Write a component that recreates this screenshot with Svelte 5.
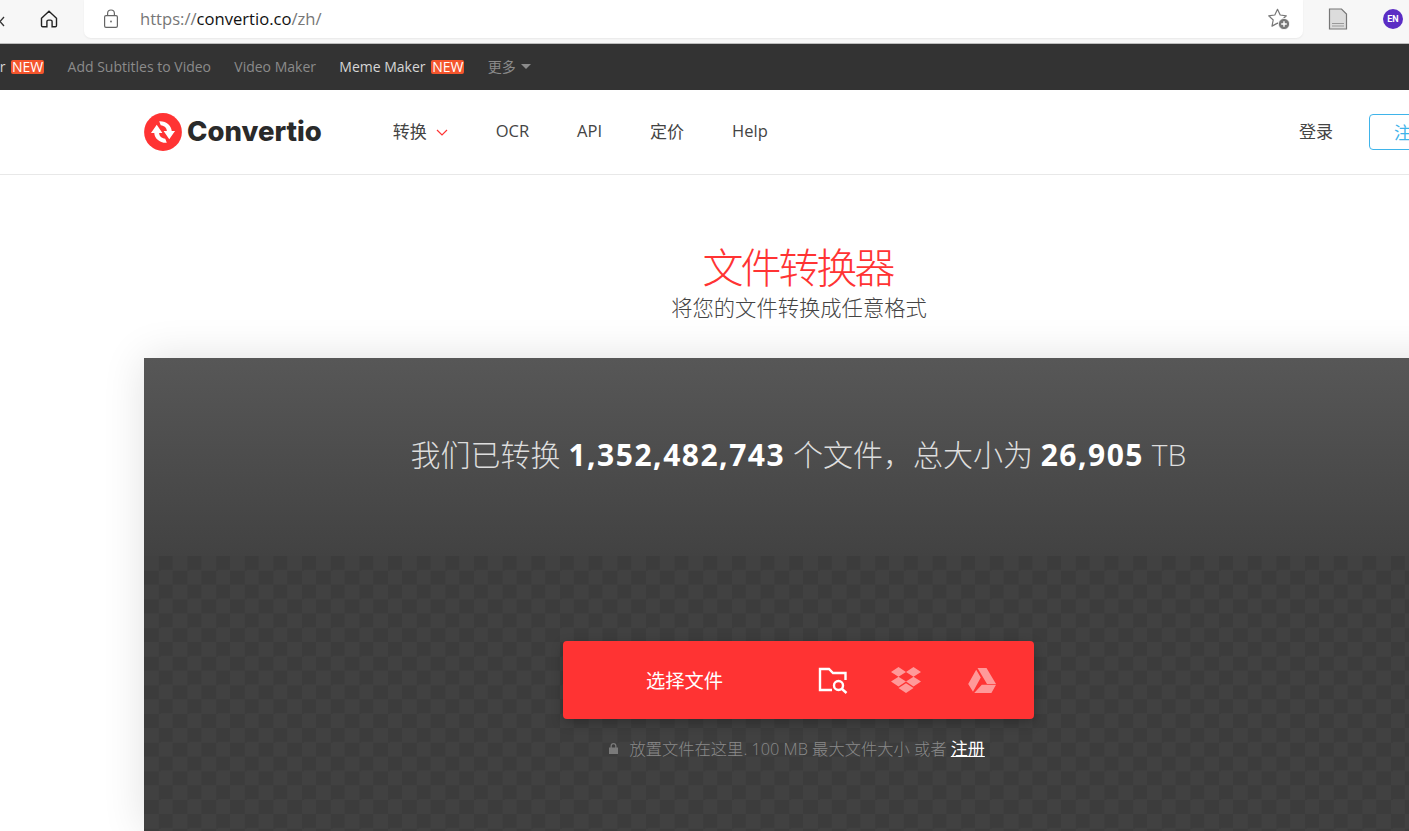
<script>
	const sans = ['Add Subtitles to Video', 'Video Maker'];
</script>

<div class="chrome">
	<svg class="close" width="6" height="12" viewBox="0 0 6 12"><path d="M-4 1l8 9M4 1l-8 9" stroke="#333" stroke-width="1.3" fill="none" /></svg>
	<svg class="home" width="20" height="20" viewBox="0 0 20 20" fill="none" stroke="#222" stroke-width="1.4">
		<path d="M2.5 9.2 10 2.2l7.5 7v7.3a1.2 1.2 0 0 1-1.2 1.2h-3.2v-5a1.6 1.6 0 0 0-1.6-1.6H9.5a1.6 1.6 0 0 0-1.6 1.6v5H3.7a1.2 1.2 0 0 1-1.2-1.2z" />
	</svg>
	<div class="address">
		<svg class="lock" width="16" height="20" viewBox="0 0 16 20" fill="none" stroke="#666" stroke-width="1.2">
			<rect x="1.6" y="6.6" width="12.8" height="11.8" rx="1.4" />
			<path d="M4.6 6.6V4.4a3.4 3.4 0 0 1 6.8 0v2.2" />
			<circle cx="8" cy="12.5" r=".9" fill="#666" stroke="none" />
		</svg>
		<span class="url"><i>https://</i>convertio.co<i>/zh/</i></span>
		<svg class="star" width="24" height="24" viewBox="0 0 24 24" fill="none">
			<path d="M10.5 2.3l2.7 5.7 6.100.8-4.500 4.200 1.200 6.100-5.500-3-5.500 3 1.200-6.100-4.500-4.200 6.100-.8z" stroke="#777" stroke-width="1.2" stroke-linejoin="round" />
			<circle cx="17" cy="17" r="5.6" fill="#777" stroke="#fff" stroke-width=".8" />
			<path d="M17 14.200v5.600M14.200 17h5.600" stroke="#fff" stroke-width="1.4" />
		</svg>
	</div>
	<svg class="doc" width="20" height="22" viewBox="0 0 20 22">
		<path d="M1.500 1h12l5 5v15h-17z" fill="#dcdcdc" stroke="#777" stroke-width="1.200" />
		<path d="M4 15h12v1H4zM4 17.500h12v1H4z" fill="#999" />
	</svg>
	<div class="avatar">EN</div>
</div>

<div class="page">
	<nav class="topnav">
		<div class="topnav__row">
			<span class="topnav__item topnav__item--lit">Video Editor <b>NEW</b></span>
			{#each sans as s}
				<span class="topnav__item">{s}</span>
			{/each}
			<span class="topnav__item topnav__item--lit">Meme Maker <b>NEW</b></span>
			<span class="topnav__item">更多 <em></em></span>
		</div>
	</nav>

	<header class="head">
		<svg class="logo" width="38" height="38" viewBox="0 0 37 37">
			<circle cx="18.500" cy="18.500" r="18.400" fill="#ff3333" />
			<path d="M6.800 19.400 12.400 11.500l5.500 7.900h-3.200c.2 3 2.400 5.200 6 5.600l1.500 4c-7 .4-11.900-4.400-12.200-9.600z" fill="#fff" />
			<path d="M30.200 17.600 24.600 25.500l-5.500-7.900h3.200c-.2-3-2.400-5.200-6-5.600l-1.500-4c7-.4 11.900 4.400 12.200 9.600z" fill="#fff" />
		</svg>
		<span class="brand">Convertio</span>
		<div class="menu">
			<span class="menu__item cjk">转换
				<svg width="12" height="7" viewBox="0 0 12 7" fill="none"><path d="M1 1l5 5 5-5" stroke="#ff3333" stroke-width="1.200" /></svg>
			</span>
			<span class="menu__item">OCR</span>
			<span class="menu__item">API</span>
			<span class="menu__item cjk">定价</span>
			<span class="menu__item">Help</span>
		</div>
		<span class="login cjk">登录</span>
		<span class="signup cjk">注册</span>
	</header>

	<section class="intro">
		<h1>文件转换器</h1>
		<h2>将您的文件转换成任意格式</h2>
	</section>

	<main class="panel">
		<div class="stats">
			我们已转换 <b>1,352,482,743</b> 个文件，总大小为 <b>26,905</b> TB
		</div>
		<div class="drop">
			<div class="pick">
				<span class="pick__label">选择文件</span>
				<svg class="pick__icon" width="30" height="28" viewBox="0 0 30 28" fill="none" stroke="#fff" stroke-width="2.400">
					<path d="M14 24H2V3h9l4 4h12.500v7" />
					<circle cx="20.500" cy="19.500" r="4.500" />
					<path d="M24 23l4.500 4" />
				</svg>
				<svg class="pick__icon pick__icon--dropbox" width="32" height="27" viewBox="0 0 32 27" fill="#fff">
					<path d="M8.500 0 16 5 8.500 9.800 1 5zM23.500 0 31 5l-7.500 4.800L16 5zM1 14.600l7.500-4.800L16 14.600l-7.500 4.800zM23.500 9.800 31 14.600l-7.500 4.800L16 14.600zM8.500 21 16 16.200 23.500 21 16 26z" />
				</svg>
				<svg class="pick__icon pick__icon--drive" width="28" height="25" viewBox="0 0 28 25" fill="#fff">
					<path d="M9.500 0h9L28 16h-9zM8.200 1.800l4.600 7.800L5 23.800.2 16zM13.800 16.800H28L23.400 25H6.200z" />
				</svg>
			</div>
			<p class="hint">
				<svg width="11" height="13" viewBox="0 0 11 13"><path d="M2.500 5.500V4a3 3 0 0 1 6 0v1.500H10V12H1V5.500zM3.800 5.500h3.400V4a1.700 1.700 0 0 0-3.400 0z" fill="#7a7a7a" /></svg>
				放置文件在这里. 100 MB 最大文件大小 或者 <u>注册</u>
			</p>
		</div>
	</main>
</div>

<style>
	:global(body) {
		margin: 0;
		background: #fff;
		overflow: hidden;
		font-family: 'Open Sans', 'Noto Sans CJK SC', sans-serif;
	}

	.chrome {
		height: 43px;
		width: 1409px;
		display: flex;
		align-items: center;
		background: #f7f7f7;
		border-bottom: 1px solid #bdbdbd;
	}
	.close {
		margin-right: 33px;
	}
	.home {
		margin-right: 25px;
		margin-top: -5px;
	}
	.address {
		width: 1219px;
		height: 38px;
		margin-top: -6px;
		background: #fff;
		border-radius: 0 0 7px 7px;
		display: flex;
		align-items: center;
		padding: 0 12px 0 19px;
		box-sizing: border-box;
		box-shadow: 0 1px 2px rgba(0, 0, 0, 0.06);
	}
	.url {
		margin-left: 21px;
		font: 16.6px 'Open Sans', sans-serif;
		color: #111;
	}
	.url i {
		font-style: normal;
		color: #777;
	}
	.star {
		margin-left: auto;
	}
	.doc {
		margin-left: 25px;
		margin-top: -6px;
	}
	.avatar {
		margin-left: 35px;
		margin-top: -6px;
		width: 20px;
		height: 20px;
		border-radius: 50%;
		background: #5b2dc4;
		color: #fff;
		font: 700 9px/20px 'Roboto', sans-serif;
		text-align: center;
		flex: none;
	}

	.page {
		width: 1598px;
	}

	.topnav {
		height: 46px;
		background: #333;
		overflow: hidden;
	}
	.topnav__row {
		display: flex;
		align-items: center;
		height: 44px;
		margin-left: -74px;
		gap: 23.300px;
		font-size: 14px;
		color: #8b8b8b;
		white-space: nowrap;
	}
	.topnav__item--lit {
		color: #d6d6d6;
	}
	.topnav__item b {
		font-weight: 400;
		color: #fff;
		background: #f4552d;
		border-radius: 2px;
		padding: 0 1px;
		margin-left: 2px;
		line-height: 14px;
		display: inline-block;
		font-size: 14px;
	}
	.topnav__item em {
		display: inline-block;
		border: 5px solid transparent;
		border-top-color: #8b8b8b;
		border-bottom: 0;
		margin-left: 2px;
		vertical-align: 3px;
	}

	.head {
		height: 84px;
		border-bottom: 1px solid #e8e8e8;
		display: flex;
		align-items: center;
		padding: 0 145px 0 144px;
		color: #444;
		font-size: 16.5px;
	}
	.cjk {
		font-family: 'Noto Sans CJK SC', sans-serif;
		font-size: 17px;
		line-height: 24px;
	}
	.logo {
		margin-top: -1px;
		flex: none;
	}
	.brand {
		margin-left: 5px;
		font: 800 27.500px 'Inter', sans-serif;
		color: #2a2a2a;
		margin-top: -2px;
	}
	.menu {
		display: flex;
		gap: 48px;
		align-items: center;
		margin-left: 71px;
		margin-top: -3px;
	}
	.menu__item svg {
		margin-left: 5px;
		vertical-align: 2px;
	}
	.login {
		margin-left: auto;
		margin-top: -3px;
	}
	.signup {
		margin-left: 36px;
		width: 84px;
		height: 36px;
		line-height: 34px;
		box-sizing: border-box;
		border: 1px solid #3fb4ea;
		border-radius: 4px;
		color: #3fb4ea;
		text-align: center;
	}

	.intro {
		height: 183px;
		text-align: center;
		box-sizing: border-box;
		padding-top: 64px;
	}
	h1 {
		margin: 0 3px 0 0;
		font-size: 41px;
		line-height: 56px;
		letter-spacing: -3px;
		font-weight: 300;
		color: #ff3333;
	}
	h2 {
		margin: -1px 0 0;
		font-size: 21.300px;
		line-height: 28px;
		font-weight: 300;
		color: #444;
	}

	.panel {
		margin-left: 144px;
		width: 1309px;
		box-shadow: 0 0 40px rgba(0, 0, 0, 0.12);
	}
	.stats {
		height: 198px;
		box-sizing: border-box;
		padding-top: 74px;
		text-align: center;
		font-size: 30px;
		line-height: 46px;
		font-weight: 300;
		color: #ddd;
		background: linear-gradient(#575757, #424242);
	}
	.stats b {
		font-weight: 700;
		color: #fff;
		letter-spacing: 1.500px;
	}
	.drop {
		height: 275px;
		box-sizing: border-box;
		padding-top: 85px;
		background-image: conic-gradient(#3c3c3c 25%, #414141 0 50%, #3c3c3c 0 75%, #414141 0);
		background-size: 28.670px 28.670px;
	}
	.pick {
		width: 471px;
		height: 78px;
		margin: 0 auto;
		background: #ff3333;
		border-radius: 4px;
		box-shadow: 0 4px 12px rgba(0, 0, 0, 0.25);
		display: flex;
		align-items: center;
		color: #fff;
		font-size: 19.300px;
		line-height: 24px;
	}
	.pick__label {
		flex: none;
		margin-left: 83px;
		width: 172px;
		margin-top: 2px;
	}
	.pick__icon {
		flex: none;
		margin-right: 42px;
	}
	.pick__icon--dropbox {
		opacity: 0.5;
		margin-right: 46px;
	}
	.pick__icon--drive {
		opacity: 0.5;
		margin-right: 0;
	}
	.hint {
		margin: 18px 0 0;
		padding-right: 4px;
		text-align: center;
		color: #8a8a8a;
		font-size: 16.300px;
		line-height: 24px;
		font-weight: 300;
	}
	.hint svg {
		margin-right: 6px;
	}
	.hint u {
		color: #fff;
		font-weight: 400;
		font-size: 17px;
	}
</style>
